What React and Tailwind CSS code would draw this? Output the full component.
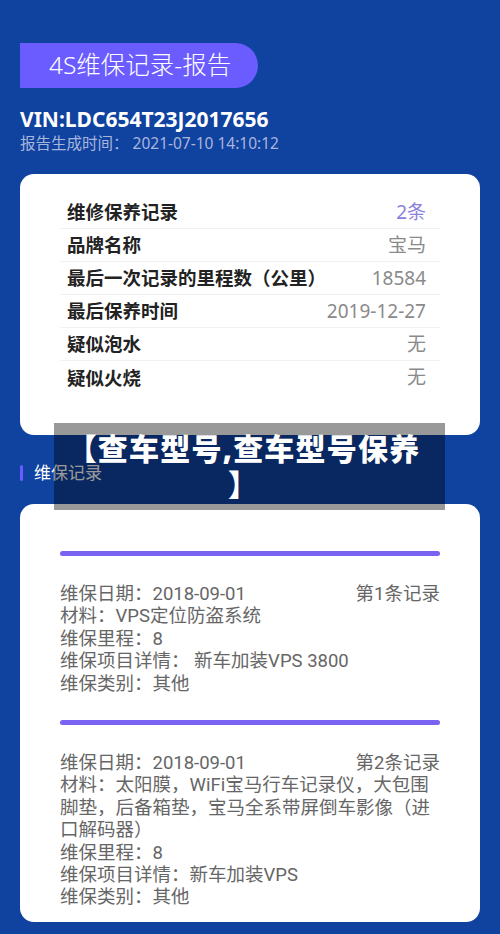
import React from "react";

const font = { fontFamily: '"Noto Sans", "Noto Sans CJK SC", sans-serif' };
const tight = { fontFamily: 'Roboto, "Noto Sans CJK SC", sans-serif' };

const summary = [
  { label: "维修保养记录", value: "2条", accent: true },
  { label: "品牌名称", value: "宝马" },
  { label: "最后一次记录的里程数（公里）", value: "18584" },
  { label: "最后保养时间", value: "2019-12-27" },
  { label: "疑似泡水", value: "无" },
  { label: "疑似火烧", value: "无" },
];

const records = [
  {
    date: "2018-09-01",
    index: "第1条记录",
    material: "VPS定位防盗系统",
    mileage: "8",
    detail: "新车加装VPS 3800",
    detailGap: true,
    type: "其他",
  },
  {
    date: "2018-09-01",
    index: "第2条记录",
    material: "太阳膜，WiFi宝马行车记录仪，大包围脚垫，后备箱垫，宝马全系带屏倒车影像（进口解码器）",
    mileage: "8",
    detail: "新车加装VPS",
    type: "其他",
  },
];

const App = () => {
  return (
    <div className="relative min-h-[934px] w-[500px] bg-[#1042a0] px-5 pt-[43px] pb-[10px]" style={font}>
      {/* Header */}
      <div className="flex h-[45px] w-[238px] items-center rounded-tl-[10px] rounded-bl-[16px] rounded-r-full bg-[#6a5cff] pl-[29px]">
        <span className="text-[24.5px] font-light leading-none text-white">4S维保记录-报告</span>
      </div>
      <h1 className="mt-[18px] text-[21px] font-bold leading-[26px] text-white">VIN:LDC654T23J2017656</h1>
      <p className="text-[15.5px] leading-[22px] text-[#a9b6dc]">报告生成时间： 2021-07-10 14:10:12</p>

      {/* Summary card */}
      <div className="mt-[20px] rounded-[14px] bg-white px-10 pt-[22px] pb-[41px]">
        {summary.map((row, i) => (
          <div
            key={row.label}
            className={`flex h-[33px] items-center justify-between pl-[7px] pr-[14px] ${
              i < summary.length - 1 ? "border-b border-[#f1f1f1]" : ""
            }`}
          >
            <span className="text-[18.5px] font-bold text-[#222]">{row.label}</span>
            <span className={`text-[19px] ${row.accent ? "text-[#8b80de]" : "text-[#8a8a8a]"}`}>{row.value}</span>
          </div>
        ))}
      </div>

      {/* Section title */}
      <div className="mt-[27px] flex items-center gap-[11px]">
        <div className="h-[16px] w-[3px] rounded-full bg-[#6a5cff]" />
        <span className="text-[17px] leading-[22px] text-white">维保记录</span>
      </div>

      {/* Records card */}
      <div className="mt-[20px] rounded-[14px] bg-white px-10 pt-[47px] pb-[13px]" style={tight}>
        {records.map((r, i) => (
          <div key={r.index} className={i > 0 ? "mt-[25px]" : ""}>
            <div className="h-[5px] rounded-full bg-[#7a62f2]" />
            <div className="mt-[27px] text-[18.5px] leading-[22.4px] text-[#666]">
              <div className="flex justify-between">
                <span>维保日期：2018-09-01</span>
                <span>{r.index}</span>
              </div>
              <p>材料：{r.material}</p>
              <p>维保里程：{r.mileage}</p>
              <p>维保项目详情：{r.detailGap ? " " : ""}{r.detail}</p>
              <p>维保类别：{r.type}</p>
            </div>
          </div>
        ))}
      </div>

      {/* Overlay banner */}
      <div className="absolute left-[54px] top-[423px] flex h-[87px] w-[391px] items-center justify-center bg-black/40 pr-[12px]">
        <p className="text-center text-[30px] font-black leading-[36px] tracking-[1.2px] text-white">
          【查车型号,查车型号保养
          <br />】
        </p>
      </div>
    </div>
  );
};

export default App;
